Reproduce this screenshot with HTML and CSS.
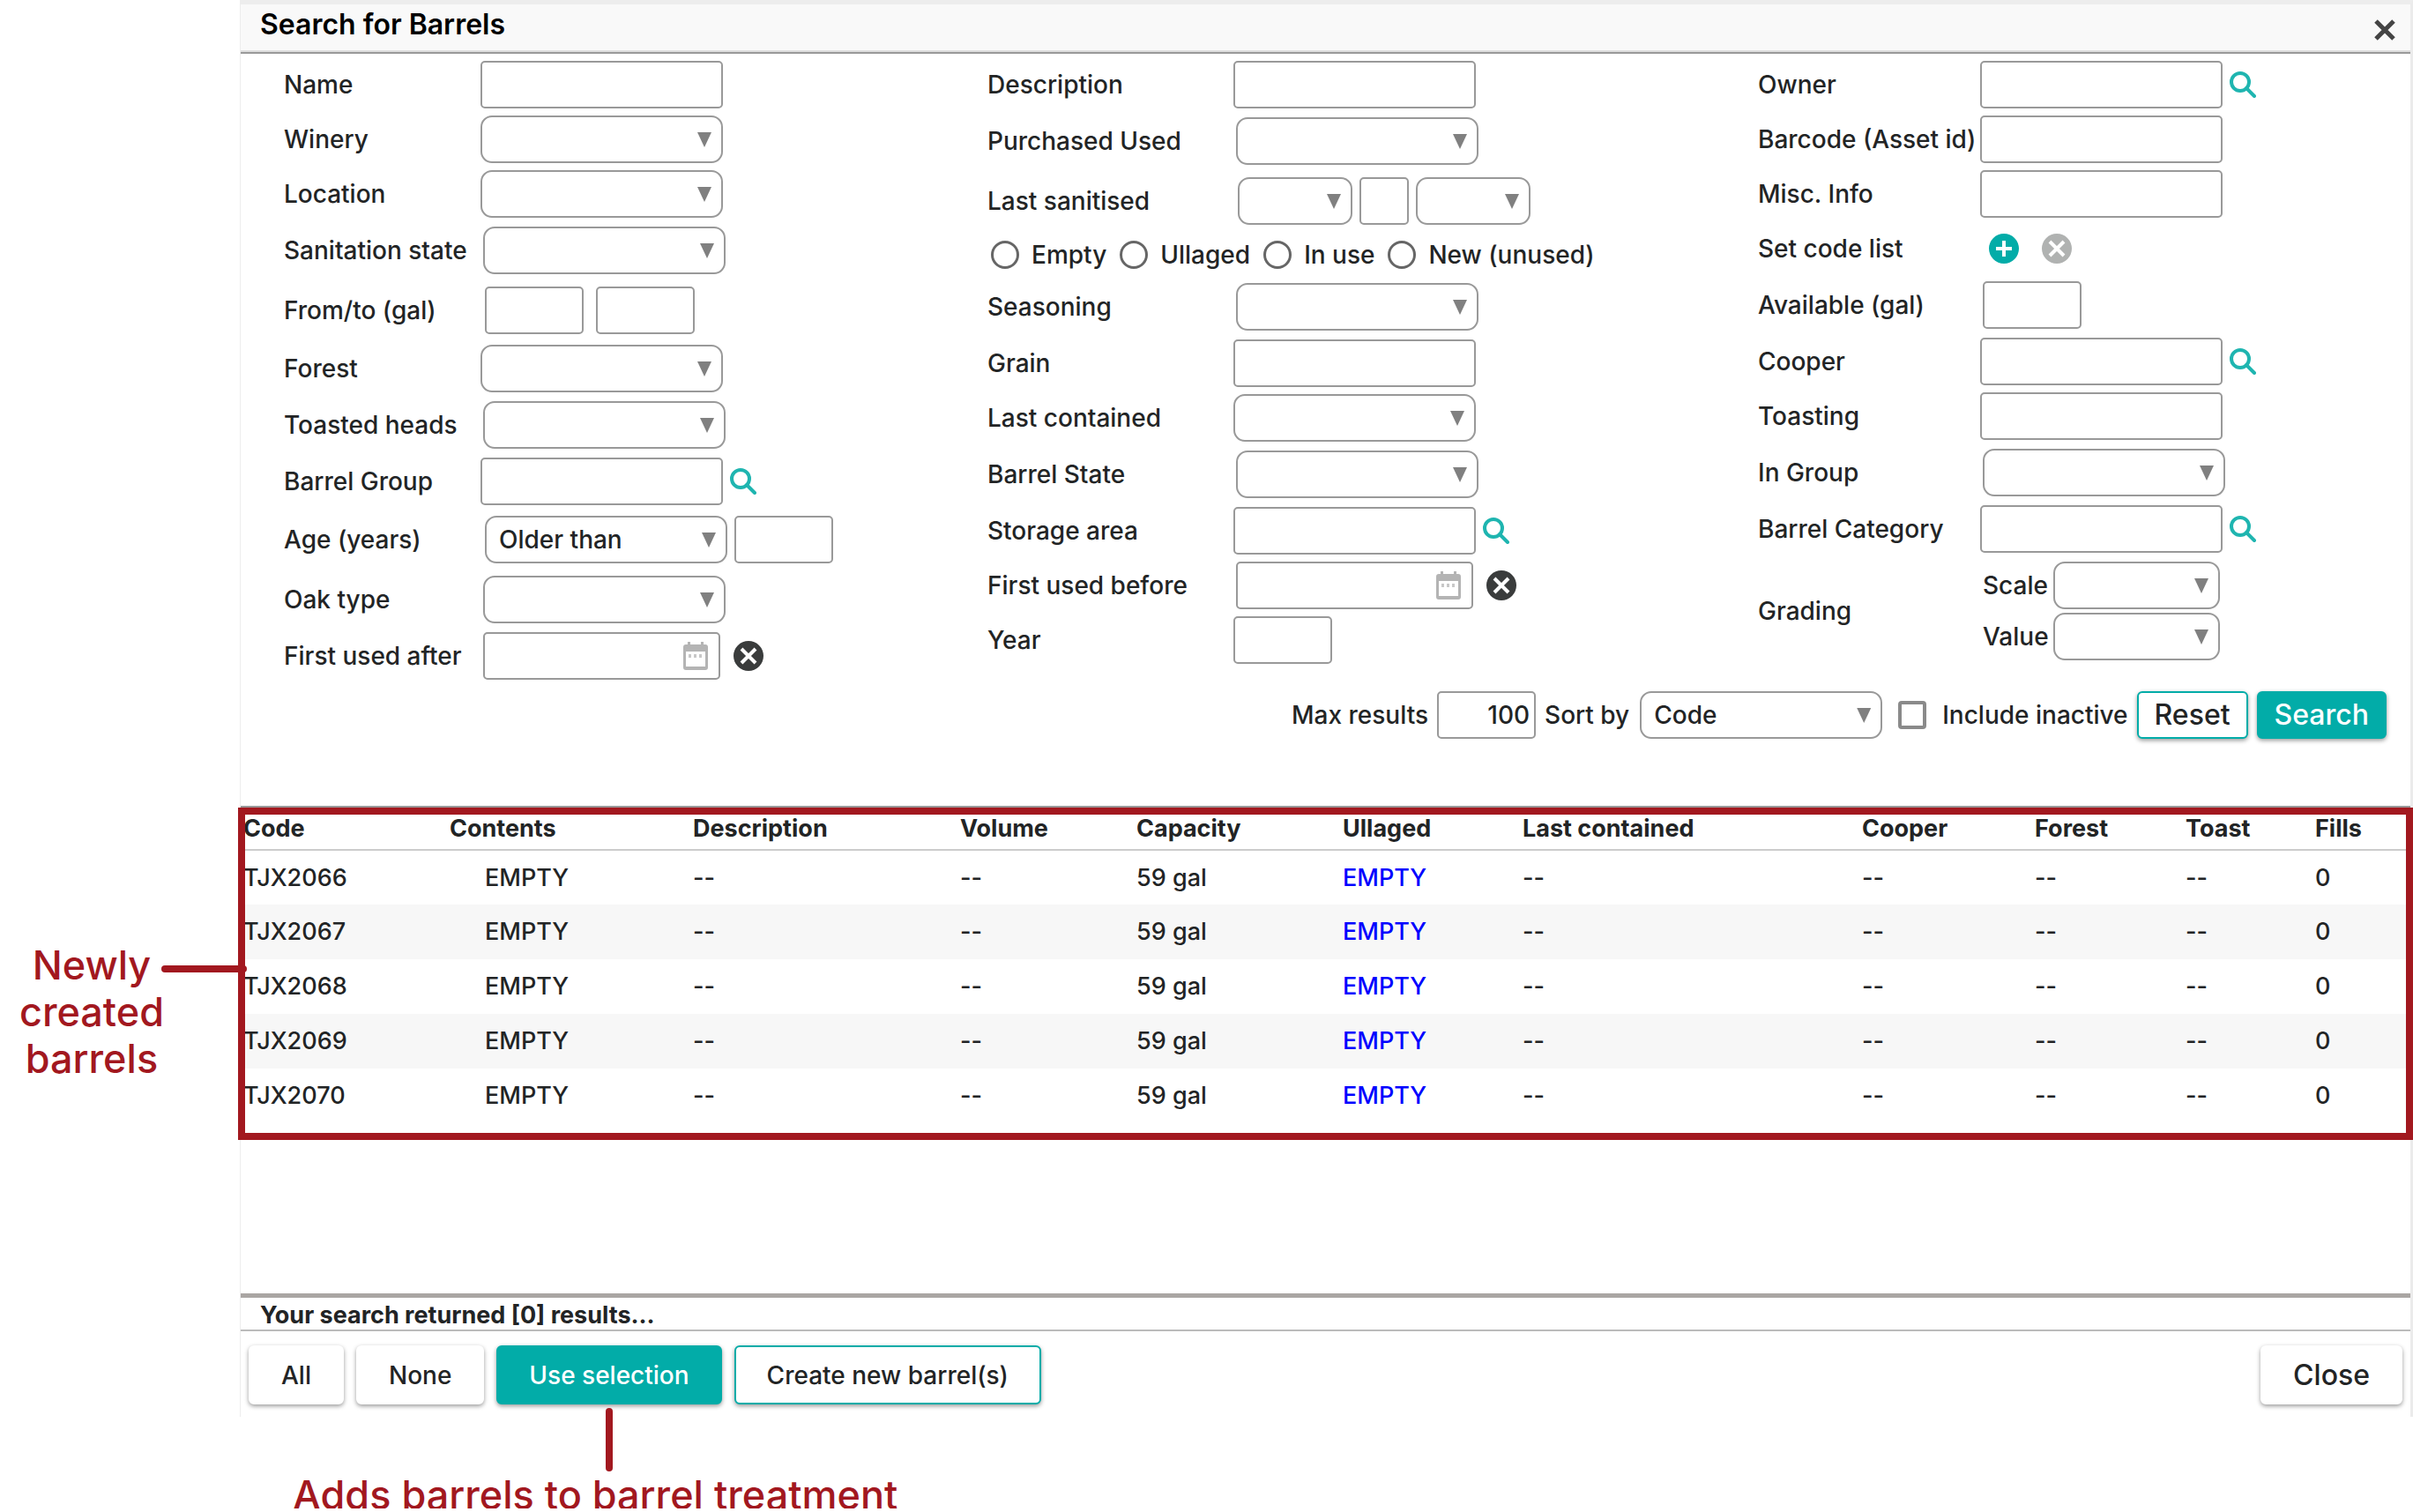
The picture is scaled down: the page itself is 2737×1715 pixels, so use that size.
FILE: index.html
```html
<!DOCTYPE html>
<html lang="en">
<head>
    <meta charset="UTF-8">
    <meta name="viewport" content="width=device-width, initial-scale=1.0">
    <title>Search for Barrels</title>
    <link rel="stylesheet" href="styles.css">
</head>
<body>

<!-- shared icons -->
<svg class="sprite" aria-hidden="true">
    <symbol id="icon-search" viewBox="0 0 30 30">
        <circle cx="12" cy="12" r="10" fill="none" stroke="#1fb5b0" stroke-width="4"/>
        <path d="M19 19L28 28" stroke="#1fb5b0" stroke-width="4" stroke-linecap="round"/>
    </symbol>
    <symbol id="icon-calendar" viewBox="0 0 28 32">
        <path d="M5 0h3v3h12V0h3v3h2a3 3 0 0 1 3 3v23a3 3 0 0 1-3 3H3a3 3 0 0 1-3-3V6a3 3 0 0 1 3-3h2z" fill="#b4b4b4"/>
        <path d="M3 11h22v17H3z" fill="#fff"/>
        <path d="M6 14h3v4H6zM12 14h3v4h-3zM18 14h3v4h-3z" fill="#c8c8c8"/>
    </symbol>
    <symbol id="icon-clear" viewBox="0 0 36 36">
        <circle cx="18" cy="18" r="17" fill="currentColor"/>
        <path d="M10 10l16 16M26 10l-16 16" stroke="#fff" stroke-width="4"/>
    </symbol>
    <symbol id="icon-add" viewBox="0 0 36 36">
        <circle cx="18" cy="18" r="17" fill="currentColor"/>
        <path d="M18 9v18M9 18h18" stroke="#fff" stroke-width="4"/>
    </symbol>
</svg>

<main class="dialog">
    <header class="dialog-header">
        <h1>Search for Barrels</h1>
        <button type="button" class="icon-btn" aria-label="Close dialog">
            <svg width="24" height="24" viewBox="0 0 24 24"><path d="M2 2l20 20M22 2L2 22" stroke="#444" stroke-width="5"/></svg>
        </button>
    </header>

    <form id="searchForm">
        <div class="columns">
            <div class="column col-left">
                <div class="field">
                    <label for="name">Name</label>
                    <input type="text" id="name">
                </div>
                <div class="field">
                    <label for="winery">Winery</label>
                    <span class="select"><select id="winery"><option></option></select></span>
                </div>
                <div class="field">
                    <label for="location">Location</label>
                    <span class="select"><select id="location"><option></option></select></span>
                </div>
                <div class="field inset">
                    <label for="sanitation">Sanitation state</label>
                    <span class="select"><select id="sanitation"><option></option></select></span>
                </div>
                <div class="field inset-2">
                    <label for="from">From/to (gal)</label>
                    <div class="group wide">
                        <input type="text" class="short" id="from">
                        <input type="text" class="short" id="to" aria-label="To (gal)">
                    </div>
                </div>
                <div class="field">
                    <label for="forest">Forest</label>
                    <span class="select"><select id="forest"><option></option></select></span>
                </div>
                <div class="field inset">
                    <label for="heads">Toasted heads</label>
                    <span class="select"><select id="heads"><option></option></select></span>
                </div>
                <div class="field">
                    <label for="group">Barrel Group</label>
                    <div class="group">
                        <input type="text" id="group">
                        <button type="button" class="icon-btn" aria-label="Find barrel group"><svg width="30" height="30"><use href="#icon-search"/></svg></button>
                    </div>
                </div>
                <div class="field inset-2">
                    <label for="age">Age (years)</label>
                    <div class="group">
                        <span class="select"><select id="age"><option>Older than</option><option>Younger than</option></select></span>
                        <input type="text" class="short" aria-label="Years">
                    </div>
                </div>
                <div class="field inset">
                    <label for="oak">Oak type</label>
                    <span class="select"><select id="oak"><option></option></select></span>
                </div>
                <div class="field inset-x">
                    <label for="usedAfter">First used after</label>
                    <div class="group wide">
                        <span class="date">
                            <input type="text" id="usedAfter">
                            <button type="button" class="icon-btn" aria-label="Pick date"><svg width="28" height="32"><use href="#icon-calendar"/></svg></button>
                        </span>
                        <button type="button" class="icon-btn dark" aria-label="Clear date"><svg width="36" height="36"><use href="#icon-clear"/></svg></button>
                    </div>
                </div>
            </div>

            <div class="column col-middle">
                <div class="field">
                    <label for="description">Description</label>
                    <input type="text" id="description">
                </div>
                <div class="field inset">
                    <label for="purchased">Purchased Used</label>
                    <span class="select"><select id="purchased"><option></option></select></span>
                </div>
                <div class="field inset-2">
                    <label for="sanitised">Last sanitised</label>
                    <div class="group">
                        <span class="select small"><select id="sanitised"><option></option></select></span>
                        <input type="text" class="tiny" aria-label="Amount">
                        <span class="select small"><select aria-label="Unit"><option></option></select></span>
                    </div>
                </div>
                <div class="field radios">
                    <label><input type="radio" name="state">Empty</label>
                    <label><input type="radio" name="state">Ullaged</label>
                    <label><input type="radio" name="state">In use</label>
                    <label><input type="radio" name="state">New (unused)</label>
                </div>
                <div class="field inset">
                    <label for="seasoning">Seasoning</label>
                    <span class="select"><select id="seasoning"><option></option></select></span>
                </div>
                <div class="field">
                    <label for="grain">Grain</label>
                    <input type="text" id="grain">
                </div>
                <div class="field">
                    <label for="contained">Last contained</label>
                    <span class="select"><select id="contained"><option></option></select></span>
                </div>
                <div class="field inset">
                    <label for="barrelState">Barrel State</label>
                    <span class="select"><select id="barrelState"><option></option></select></span>
                </div>
                <div class="field">
                    <label for="storage">Storage area</label>
                    <div class="group">
                        <input type="text" id="storage">
                        <button type="button" class="icon-btn" aria-label="Find storage area"><svg width="30" height="30"><use href="#icon-search"/></svg></button>
                    </div>
                </div>
                <div class="field inset-x">
                    <label for="usedBefore">First used before</label>
                    <div class="group wide">
                        <span class="date">
                            <input type="text" id="usedBefore">
                            <button type="button" class="icon-btn" aria-label="Pick date"><svg width="28" height="32"><use href="#icon-calendar"/></svg></button>
                        </span>
                        <button type="button" class="icon-btn dark" aria-label="Clear date"><svg width="36" height="36"><use href="#icon-clear"/></svg></button>
                    </div>
                </div>
                <div class="field">
                    <label for="year">Year</label>
                    <input type="text" class="short" id="year">
                </div>
            </div>

            <div class="column col-right">
                <div class="field">
                    <label for="owner">Owner</label>
                    <div class="group">
                        <input type="text" id="owner">
                        <button type="button" class="icon-btn" aria-label="Find owner"><svg width="30" height="30"><use href="#icon-search"/></svg></button>
                    </div>
                </div>
                <div class="field">
                    <label for="barcode">Barcode (Asset id)</label>
                    <input type="text" id="barcode">
                </div>
                <div class="field">
                    <label for="misc">Misc. Info</label>
                    <input type="text" id="misc">
                </div>
                <div class="field">
                    <span class="label">Set code list</span>
                    <div class="group codes">
                        <button type="button" class="icon-btn teal" aria-label="Add code list"><svg width="36" height="36"><use href="#icon-add"/></svg></button>
                        <button type="button" class="icon-btn grey" aria-label="Clear code list"><svg width="36" height="36"><use href="#icon-clear"/></svg></button>
                    </div>
                </div>
                <div class="field inset">
                    <label for="available">Available (gal)</label>
                    <input type="text" class="short" id="available">
                </div>
                <div class="field">
                    <label for="cooper">Cooper</label>
                    <div class="group">
                        <input type="text" id="cooper">
                        <button type="button" class="icon-btn" aria-label="Find cooper"><svg width="30" height="30"><use href="#icon-search"/></svg></button>
                    </div>
                </div>
                <div class="field">
                    <label for="toasting">Toasting</label>
                    <input type="text" id="toasting">
                </div>
                <div class="field inset">
                    <label for="inGroup">In Group</label>
                    <span class="select"><select id="inGroup"><option></option></select></span>
                </div>
                <div class="field">
                    <label for="category">Barrel Category</label>
                    <div class="group">
                        <input type="text" id="category">
                        <button type="button" class="icon-btn" aria-label="Find barrel category"><svg width="30" height="30"><use href="#icon-search"/></svg></button>
                    </div>
                </div>
                <div class="field inset">
                    <span class="label">Grading</span>
                    <div class="grading">
                        <label for="scale">Scale</label>
                        <span class="select medium"><select id="scale"><option></option></select></span>
                        <label for="value">Value</label>
                        <span class="select medium"><select id="value"><option></option></select></span>
                    </div>
                </div>
            </div>
        </div>

        <div class="actions">
            <label for="max">Max results</label>
            <input type="text" class="short number" id="max" value="100">
            <label for="sort" class="sort">Sort by</label>
            <span class="select"><select id="sort"><option>Code</option><option>Description</option></select></span>
            <label class="check"><input type="checkbox">Include inactive</label>
            <button type="reset" class="btn outline large">Reset</button>
            <button type="submit" class="btn primary large">Search</button>
        </div>
    </form>

    <section class="results">
        <table>
            <colgroup>
                <col class="w-code"><col class="w-contents"><col class="w-description"><col class="w-volume">
                <col class="w-capacity"><col class="w-ullaged"><col><col class="w-cooper">
                <col class="w-forest"><col class="w-toast"><col class="w-fills">
            </colgroup>
            <thead>
                <tr><th>Code</th><th>Contents</th><th>Description</th><th>Volume</th><th>Capacity</th><th>Ullaged</th><th>Last contained</th><th>Cooper</th><th>Forest</th><th>Toast</th><th>Fills</th></tr>
            </thead>
            <tbody>
                <tr><td>TJX2066</td><td class="contents">EMPTY</td><td>--</td><td>--</td><td>59 gal</td><td><a href="#">EMPTY</a></td><td>--</td><td>--</td><td>--</td><td>--</td><td>0</td></tr>
                <tr><td>TJX2067</td><td class="contents">EMPTY</td><td>--</td><td>--</td><td>59 gal</td><td><a href="#">EMPTY</a></td><td>--</td><td>--</td><td>--</td><td>--</td><td>0</td></tr>
                <tr><td>TJX2068</td><td class="contents">EMPTY</td><td>--</td><td>--</td><td>59 gal</td><td><a href="#">EMPTY</a></td><td>--</td><td>--</td><td>--</td><td>--</td><td>0</td></tr>
                <tr><td>TJX2069</td><td class="contents">EMPTY</td><td>--</td><td>--</td><td>59 gal</td><td><a href="#">EMPTY</a></td><td>--</td><td>--</td><td>--</td><td>--</td><td>0</td></tr>
                <tr><td>TJX2070</td><td class="contents">EMPTY</td><td>--</td><td>--</td><td>59 gal</td><td><a href="#">EMPTY</a></td><td>--</td><td>--</td><td>--</td><td>--</td><td>0</td></tr>
            </tbody>
        </table>
        <div class="highlight">
            <p class="note note-side">Newly<br>created<br>barrels</p>
        </div>
    </section>

    <p class="status">Your search returned [0] results...</p>

    <footer class="dialog-footer">
        <button type="button" class="btn">All</button>
        <button type="button" class="btn">None</button>
        <span class="pointer"><button type="button" class="btn primary">Use selection</button></span>
        <button type="button" class="btn outline">Create new barrel(s)</button>
        <button type="button" class="btn large close">Close</button>
    </footer>
</main>

<p class="note note-bottom">Adds barrels to barrel treatment</p>

</body>
</html>
```
FILE: styles.css
```css
* {
    box-sizing: border-box;
}
body {
    margin: 0;
    background-color: #ffffff;
    color: #222425;
    font-family: Inter, "Open Sans", sans-serif;
    font-size: 28px;
    font-weight: 500;
    line-height: 32px;
}
h1, p {
    margin: 0;
}
input, select, button {
    font: inherit;
    color: inherit;
    margin: 0;
}
.sprite {
    position: absolute;
    width: 0;
    height: 0;
}

/* dialog */
.dialog {
    margin-left: 272px;
    border-top: 5px solid #ededed;
    border-left: 1px solid #ededed;
    border-right: 3px solid #ebebeb;
}
.dialog-header {
    display: flex;
    justify-content: space-between;
    align-items: center;
    height: 56px;
    padding: 0 17px 8px 22px;
    background-color: #f9f9f9;
    border-bottom: 2px solid #999;
    box-shadow: inset 0 -2px #ddd;
}
.dialog-header h1 {
    color: #000;
    font-size: 32px;
    font-weight: 600;
}
.icon-btn {
    display: flex;
    padding: 0;
    border: 0;
    background: none;
}
.dialog-header .icon-btn {
    padding-top: 11px;
}
.dark {
    color: #3a3c3c;
}
.teal {
    color: #02aca8;
}
.grey {
    color: #b0b2b1;
}

/* search form */
.columns {
    display: grid;
    grid-template-columns: 798fr 874fr 740fr;
    padding: 8px 0 0 49px;
}
.col-left {
    --label-width: 223px;
}
.col-middle {
    --label-width: 279px;
}
.col-right {
    --label-width: 252px;
}
.field {
    display: flex;
    align-items: center;
    min-height: 54px;
    margin-bottom: 8px;
}
.field > label, .field > .label {
    flex: none;
    width: var(--label-width);
    white-space: nowrap;
}
.inset {
    padding: 2px 0;
}
.inset-2 {
    padding: 4px 0;
}
.inset > :last-child, .inset-x > :last-child {
    margin-left: 3px;
}
.inset-2 > :last-child {
    margin-left: 5px;
}
.group {
    display: flex;
    align-items: center;
    gap: 8px;
}
.group.wide {
    gap: 14px;
}
.group.codes {
    gap: 24px;
    padding-left: 9px;
}
input[type="text"], select {
    width: 275px;
    height: 54px;
    border: 2px solid #999;
    background-color: #fff;
}
input[type="text"] {
    padding: 0 5px;
    border-radius: 5px;
}
input.short {
    width: 112px;
}
input.tiny {
    width: 56px;
}
input.number {
    text-align: right;
}
select {
    display: block;
    appearance: none;
    padding: 0 30px 0 14px;
    border-radius: 13px;
}
.select {
    position: relative;
}
.select::after {
    content: "";
    position: absolute;
    top: 19px;
    right: 13px;
    width: 16px;
    height: 17px;
    background-color: #808080;
    clip-path: polygon(0 0, 100% 0, 50% 100%);
    pointer-events: none;
}
.small select {
    width: 130px;
}
.medium select {
    width: 189px;
}
.date {
    position: relative;
}
.date input[type="text"] {
    display: block;
    width: 269px;
    padding-right: 48px;
}
.date .icon-btn {
    position: absolute;
    top: 11px;
    right: 14px;
}
.radios {
    min-height: 44px;
    gap: 15px;
    padding-left: 4px;
}
.field.radios > label, .check {
    display: flex;
    align-items: center;
    gap: 14px;
    width: auto;
}
input[type="radio"], input[type="checkbox"] {
    appearance: none;
    width: 32px;
    height: 32px;
    border: 3px solid #666;
    border-radius: 50%;
}
input[type="checkbox"] {
    border: 4px solid #8a8a8a;
    border-radius: 4px;
}
.grading {
    display: grid;
    grid-template-columns: 80px auto;
    align-items: center;
    row-gap: 4px;
}
.actions {
    display: flex;
    justify-content: flex-end;
    align-items: center;
    gap: 10px;
    padding: 5px 27px 0 0;
}
.actions .sort {
    padding-right: 2px;
}
.actions .check {
    gap: 18px;
    padding-left: 8px;
}

/* buttons */
.btn {
    height: 67px;
    padding: 0 35px;
    border: 2px solid #fff;
    border-radius: 6px;
    background-color: #fff;
    box-shadow: 0 2px 5px rgba(0, 0, 0, 0.4);
}
.btn.outline {
    border-color: #02aca8;
}
.btn.primary {
    border-color: #02aca8;
    background-color: #02aca8;
    color: #fff;
}
.btn.large {
    font-size: 32px;
}
.actions .btn {
    height: 54px;
    padding: 0 18px;
}

/* results */
.results {
    position: relative;
    min-height: 553px;
    margin-top: 76px;
    border-top: 2px solid #999;
    font-size: 27px;
}
table {
    width: 100%;
    table-layout: fixed;
    border-collapse: collapse;
}
th, td {
    height: 62px;
    padding: 0 0 0 3px;
    text-align: left;
    white-space: nowrap;
}
th {
    height: 48px;
    border-bottom: 2px solid #ccc;
    font-weight: 700;
}
td.contents {
    padding-left: 43px;
}
td a {
    color: #0000ff;
    text-decoration: none;
}
tbody tr:nth-child(even) {
    background-color: #f7f7f7;
}
.w-code { width: 234px; }
.w-contents { width: 276px; }
.w-description { width: 303px; }
.w-volume { width: 200px; }
.w-capacity { width: 234px; }
.w-ullaged { width: 204px; }
.w-cooper { width: 196px; }
.w-forest { width: 171px; }
.w-toast { width: 147px; }
.w-fills { width: 111px; }

/* call-outs */
.highlight {
    position: absolute;
    top: 0;
    left: -3px;
    right: -3px;
    height: 377px;
    border: 8px solid #a2181f;
    pointer-events: none;
}
.highlight::before {
    content: "";
    position: absolute;
    top: 171px;
    left: -95px;
    width: 97px;
    height: 8px;
    border-radius: 4px;
    background-color: #a2181f;
}
.note {
    color: #a2181f;
    font-size: 45px;
    line-height: 53px;
}
.note-side {
    position: absolute;
    top: 144px;
    right: 100%;
    margin-right: 92px;
    text-align: center;
}
.note-bottom {
    margin: 73px 0 0 332px;
    line-height: 31px;
}
.pointer {
    position: relative;
}
.pointer::after {
    content: "";
    position: absolute;
    top: 71px;
    left: calc(50% - 4px);
    width: 8px;
    height: 72px;
    border-radius: 4px;
    background-color: #a2181f;
}

/* footer */
.status {
    height: 43px;
    padding: 4px 22px 0;
    border-top: 5px solid #aaa6a3;
    border-bottom: 2px solid #bbb;
    font-size: 27px;
    font-weight: 700;
}
.dialog-footer {
    display: flex;
    gap: 14px;
    padding: 16px 9px 14px;
}
.close {
    margin-left: auto;
}
```
